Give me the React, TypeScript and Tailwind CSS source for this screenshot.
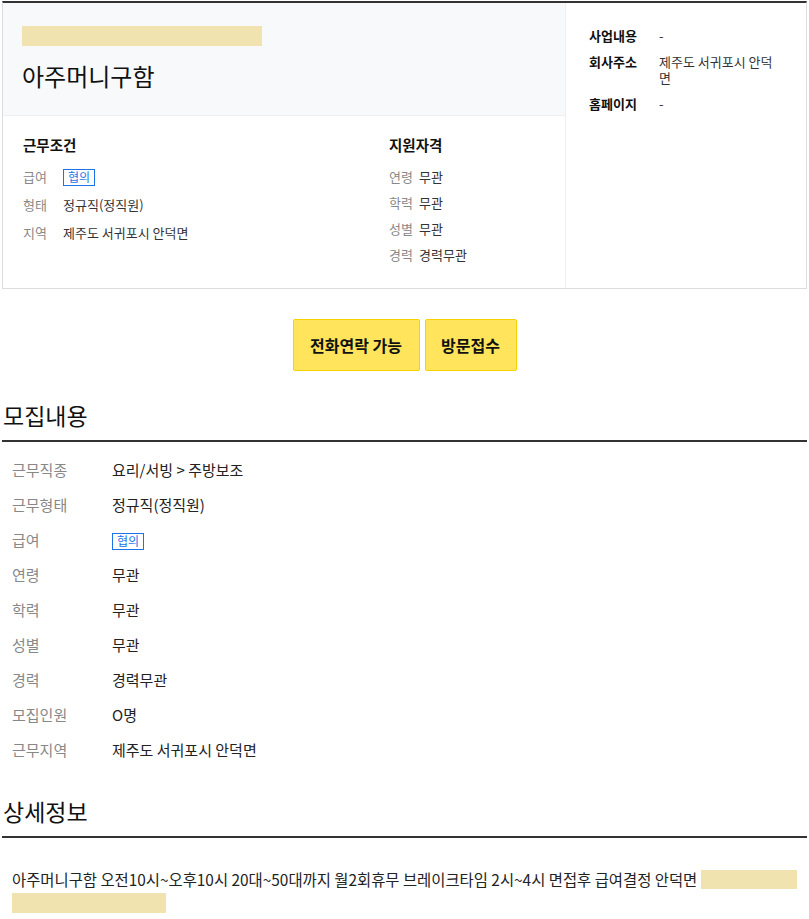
import React from "react";

const font = "font-['Noto_Sans_CJK_KR','Noto_Sans',sans-serif]";

function Badge() {
  return (
    <span className="inline-flex h-[17px] items-center border border-[#1a73e8] px-[4px] text-[12px] leading-none text-[#1a73e8]">
      협의
    </span>
  );
}

const recruit: [string, React.ReactNode][] = [
  ["근무직종", "요리/서빙 > 주방보조"],
  ["근무형태", "정규직(정직원)"],
  ["급여", <Badge />],
  ["연령", "무관"],
  ["학력", "무관"],
  ["성별", "무관"],
  ["경력", "경력무관"],
  ["모집인원", "O명"],
  ["근무지역", "제주도 서귀포시 안덕면"],
];

export default function App() {
  return (
    <div className={`${font} w-[809px] bg-white px-[2px] text-[#222]`}>
      {/* Top summary box */}
      <div className="mt-[1px] flex border border-t-2 border-[#dddddd] border-t-[#333333]">
        <div className="w-[563px] border-r border-[#eeeeee]">
          <div className="h-[113px] border-b border-[#eeeeee] bg-[#f8f9fb] pl-[19px] pt-[23px]">
            <div className="h-[20px] w-[240px] bg-[#f0e3b0]" />
            <h1 className="mt-[15px] text-[24px] leading-[30px] text-[#111]">아주머니구함</h1>
          </div>
          <div className="flex h-[172px] pl-[20px] pt-[19px]">
            <div className="w-[366px]">
              <h3 className="text-[14.5px] font-bold leading-[20px] text-[#111]">근무조건</h3>
              <div className="mt-[8px] flex flex-col text-[13px]">
                <div className="flex h-[28px] items-center">
                  <span className="w-[40px] text-[#888]">급여</span>
                  <Badge />
                </div>
                <div className="flex h-[28px] items-center">
                  <span className="w-[40px] text-[#888]">형태</span>
                  <span className="text-[#333]">정규직(정직원)</span>
                </div>
                <div className="flex h-[28px] items-center">
                  <span className="w-[40px] text-[#888]">지역</span>
                  <span className="text-[#333]">제주도 서귀포시 안덕면</span>
                </div>
              </div>
            </div>
            <div>
              <h3 className="text-[14.5px] font-bold leading-[20px] text-[#111]">지원자격</h3>
              <div className="mt-[9px] flex flex-col text-[13px]">
                {[
                  ["연령", "무관"],
                  ["학력", "무관"],
                  ["성별", "무관"],
                  ["경력", "경력무관"],
                ].map(([k, v]) => (
                  <div key={k} className="flex h-[26px] items-center">
                    <span className="w-[30px] text-[#888]">{k}</span>
                    <span className="text-[#333]">{v}</span>
                  </div>
                ))}
              </div>
            </div>
          </div>
        </div>
        <div className="flex-1 pl-[23px] pt-[25px] text-[13px] leading-[16px]">
          <div className="flex flex-col gap-[10px]">
            <div className="flex">
              <span className="w-[70px] font-bold text-[#111]">사업내용</span>
              <span className="text-[#333]">-</span>
            </div>
            <div className="flex">
              <span className="w-[70px] font-bold text-[#111]">회사주소</span>
              <span className="w-[120px] text-[#333]">제주도 서귀포시 안덕면</span>
            </div>
            <div className="flex">
              <span className="w-[70px] font-bold text-[#111]">홈페이지</span>
              <span className="text-[#333]">-</span>
            </div>
          </div>
        </div>
      </div>

      {/* Buttons */}
      <div className="mt-[30px] flex justify-center gap-[5px]">
        <button className="flex h-[52px] w-[127px] items-center justify-center rounded-[2px] border border-[#f5d200] bg-[#ffe45c] text-[16px] font-bold text-[#111]">
          전화연락 가능
        </button>
        <button className="flex h-[52px] w-[92px] items-center justify-center rounded-[2px] border border-[#f5d200] bg-[#ffe45c] text-[16px] font-bold text-[#111]">
          방문접수
        </button>
      </div>

      {/* 모집내용 */}
      <h2 className="mt-[29px] border-b-2 border-[#333333] pb-[10px] pl-[1px] text-[23px] leading-[30px] text-[#111]">
        모집내용
      </h2>
      <div className="flex flex-col pl-[10px] pt-[11px] text-[15px]">
        {recruit.map(([k, v]) => (
          <div key={k} className="flex h-[35px] items-center">
            <span className="w-[100px] text-[#888]">{k}</span>
            <span className="text-[#222]">{v}</span>
          </div>
        ))}
      </div>

      {/* 상세정보 */}
      <h2 className="mt-[28px] border-b-2 border-[#333333] pb-[10px] pl-[1px] text-[23px] leading-[30px] text-[#111]">
        상세정보
      </h2>
      <div className="pl-[10px] pt-[30px] text-[15.4px] leading-[23px] text-[#222]">
        <div className="flex items-center">
          <span>아주머니구함 오전10시~오후10시 20대~50대까지 월2회휴무 브레이크타임 2시~4시 면접후 급여결정 안덕면</span>
          <span className="ml-[4px] inline-block h-[19px] w-[96px] bg-[#f0e3b0]" />
        </div>
        <div className="flex h-[23px] items-center">
          <span className="inline-block h-[20px] w-[154px] bg-[#f0e3b0]" />
        </div>
      </div>
    </div>
  );
}
